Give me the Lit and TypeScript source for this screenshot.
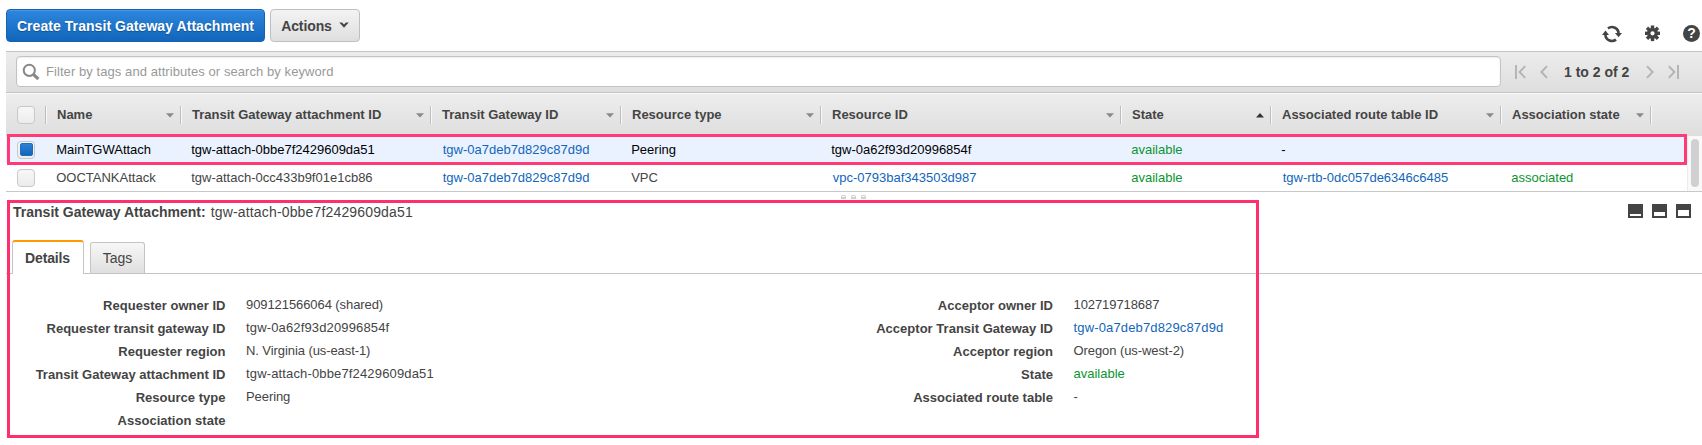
import { LitElement, html, css, svg, nothing } from "lit";
import { customElement, property, state } from "lit/decorators.js";
import { classMap } from "lit/directives/class-map.js";

type Cell = { text: string; kind?: "link" | "ok" };
type Row = { selected: boolean; cells: Cell[] };
type Field = { label: string; value: string; kind?: "link" | "ok" };

const COLUMNS = [
  "Name",
  "Transit Gateway attachment ID",
  "Transit Gateway ID",
  "Resource type",
  "Resource ID",
  "State",
  "Associated route table ID",
  "Association state",
];

const ROWS: Row[] = [
  {
    selected: true,
    cells: [
      { text: "MainTGWAttach" },
      { text: "tgw-attach-0bbe7f2429609da51" },
      { text: "tgw-0a7deb7d829c87d9d", kind: "link" },
      { text: "Peering" },
      { text: "tgw-0a62f93d20996854f" },
      { text: "available", kind: "ok" },
      { text: "-" },
      { text: "" },
    ],
  },
  {
    selected: false,
    cells: [
      { text: "OOCTANKAttack" },
      { text: "tgw-attach-0cc433b9f01e1cb86" },
      { text: "tgw-0a7deb7d829c87d9d", kind: "link" },
      { text: "VPC" },
      { text: "vpc-0793baf343503d987", kind: "link" },
      { text: "available", kind: "ok" },
      { text: "tgw-rtb-0dc057de6346c6485", kind: "link" },
      { text: "associated", kind: "ok" },
    ],
  },
];

const REQUESTER: Field[] = [
  { label: "Requester owner ID", value: "909121566064 (shared)" },
  { label: "Requester transit gateway ID", value: "tgw-0a62f93d20996854f" },
  { label: "Requester region", value: "N. Virginia (us-east-1)" },
  { label: "Transit Gateway attachment ID", value: "tgw-attach-0bbe7f2429609da51" },
  { label: "Resource type", value: "Peering" },
  { label: "Association state", value: "" },
];

const ACCEPTOR: Field[] = [
  { label: "Acceptor owner ID", value: "102719718687" },
  { label: "Acceptor Transit Gateway ID", value: "tgw-0a7deb7d829c87d9d", kind: "link" },
  { label: "Acceptor region", value: "Oregon (us-west-2)" },
  { label: "State", value: "available", kind: "ok" },
  { label: "Associated route table", value: "-" },
];

@customElement("top-toolbar")
class TopToolbar extends LitElement {
  static styles = css`
    :host { display: flex; height: 51px; box-sizing: border-box; padding: 9px 2px 0 6px; }
    .btn {
      box-sizing: border-box; height: 33px; border-radius: 4px; font: bold 14px/31px "Liberation Sans", Arial, sans-serif;
      padding: 0; white-space: nowrap; display: flex; align-items: center; justify-content: center;
    }
    .primary {
      width: 259px; margin-right: 5px; color: #fff; border: 1px solid #1663b4;
      background: linear-gradient(#2e86de, #1166bb); letter-spacing: 0.06px; padding: 2px 0 0;
      text-shadow: 0 1px 1px rgba(0, 0, 0, 0.3);
      box-shadow: inset 0 1px 0 #4896e3;
    }
    .plain {
      width: 90px; gap: 7px; color: #444; border: 1px solid #bfbfbf; letter-spacing: -0.1px; padding: 2px 0 0;
      background: linear-gradient(#f3f3f3, #dfdfdf);
    }
    .chevron { margin-bottom: 3px; }
    .icons { margin-left: auto; display: flex; align-items: flex-start; padding-top: 16px; }
    .icons svg { display: block; }
    .refresh { margin-right: 23px; }
    .gear { margin-right: 23px; }
    .q { font: bold 14px "Liberation Sans", Arial, sans-serif; }
  `;
  render() {
    const teeth = [0, 45, 90, 135, 180, 225, 270, 315];
    return html`
      <button class="btn primary">Create Transit Gateway Attachment</button>
      <button class="btn plain">
        Actions
        <svg class="chevron" width="10" height="6" viewBox="0 0 10 6"><path d="M.3.4H3L5 2.6 7 .4h2.7L5 5.8z" fill="#444"/></svg>
      </button>
      <div class="icons">
        <svg class="refresh" width="20" height="18" viewBox="0 0 20 18">
          <g fill="none" stroke="#444" stroke-width="2.6">
            <path d="M6 3.4A6.6 6.6 0 0 1 16.6 8.6"/>
            <path d="M14 14.6A6.6 6.6 0 0 1 3.4 9.4"/>
          </g>
          <path d="M13 8h7l-3.5 4.2z" fill="#444"/><path d="M0 10h7L3.5 5.6z" fill="#444"/>
        </svg>
        <svg class="gear" width="15" height="17" viewBox="0 0 15 17">
          <g fill="#444">
            ${teeth.map((a) => svg`<rect x="5.8" y="0.5" width="3.4" height="4" transform="rotate(${a} 7.5 8.3)"/>`)}
            <path fill-rule="evenodd" d="M7.5 2.8a5.5 5.5 0 1 1 0 11a5.5 5.5 0 1 1 0-11M7.5 6.2a2.1 2.1 0 1 0 0 4.2a2.1 2.1 0 1 0 0-4.2"/>
          </g>
        </svg>
        <svg width="17" height="17" viewBox="0 0 17 17">
          <circle cx="8.5" cy="8.5" r="8.5" fill="#444"/>
          <text class="q" x="8.5" y="13.4" text-anchor="middle" fill="#fff">?</text>
        </svg>
      </div>
    `;
  }
}

@customElement("filter-bar")
class FilterBar extends LitElement {
  static styles = css`
    :host {
      display: flex; box-sizing: border-box; height: 42px; margin-left: 6px; padding: 4px 0 0 10px;
      border-top: 1px solid #c4c4c4; border-bottom: 1px solid #c4c4c4;
      background: linear-gradient(#ececec, #dedede); font-family: "Liberation Sans", Arial, sans-serif;
    }
    .search {
      box-sizing: border-box; width: 1485px; height: 31px; border: 1px solid #c3c3c3; border-radius: 4px;
      background: #fff; display: flex; align-items: center; padding-left: 5px; gap: 6px;
      box-shadow: inset 0 1px 2px rgba(0, 0, 0, 0.08);
    }
    .hint { font-size: 13px; letter-spacing: 0.07px; color: #999; white-space: nowrap; }
    .pager { display: flex; align-items: center; height: 32px; margin-left: 14px; }
    .count { font-weight: bold; font-size: 14px; color: #444; width: 65px; white-space: nowrap; margin: 0 17px 0 16px; }
    .prev { margin-left: 14px; }
    .last { margin-left: 14px; }
  `;
  render() {
    return html`
      <label class="search">
        <svg width="18" height="18" viewBox="0 0 18 18">
          <circle cx="7.3" cy="7.3" r="5.6" fill="none" stroke="#888" stroke-width="2"/>
          <path d="m11.6 11.6 4.8 4.4" stroke="#888" stroke-width="3.2"/>
        </svg>
        <span class="hint">Filter by tags and attributes or search by keyword</span>
      </label>
      <div class="pager">
        <svg width="11" height="14" viewBox="0 0 11 14"><path d="M1 0v14M10.2 1.2 4.6 7l5.6 5.8" fill="none" stroke="#b3b3b3" stroke-width="1.9"/></svg>
        <svg class="prev" width="8" height="14" viewBox="0 0 8 14"><path d="M7 1.2 1.4 7 7 12.8" fill="none" stroke="#b3b3b3" stroke-width="1.9"/></svg>
        <span class="count">1 to 2 of 2</span>
        <svg width="8" height="14" viewBox="0 0 8 14"><path d="M1 1.2 6.6 7 1 12.8" fill="none" stroke="#b3b3b3" stroke-width="1.9"/></svg>
        <svg class="last" width="11" height="14" viewBox="0 0 11 14"><path d="M10 0v14M.8 1.2 6.4 7 .8 12.8" fill="none" stroke="#b3b3b3" stroke-width="1.9"/></svg>
      </div>
    `;
  }
}

@customElement("check-box")
class CheckBox extends LitElement {
  @property({ type: Boolean }) checked = false;
  static styles = css`
    :host { display: block; width: 18px; height: 18px; }
    .box {
      box-sizing: border-box; width: 18px; height: 18px; border: 1px solid #c8c8c8; border-radius: 4px;
      background: linear-gradient(#f7f7f7, #ececec); padding: 2px;
    }
    .fill { width: 13px; height: 13px; margin: -0.5px; box-sizing: border-box; border-radius: 2px; border: 1px solid #1b6dbe; background: linear-gradient(#2b82d9, #1465b8); }
  `;
  render() {
    return html`<div class="box">${this.checked ? html`<div class="fill"></div>` : nothing}</div>`;
  }
}

@customElement("attachment-table")
class AttachmentTable extends LitElement {
  static styles = css`
    :host { display: block; margin-left: 6px; font: 13px/18px "Liberation Sans", Arial, sans-serif; color: #444; border-bottom: 1px solid #c8c8c8; }
    .row { display: grid; grid-template-columns: 39px 135px 250px 190px 200px 300px 150px 230px 150px 1fr; align-items: center; }
    .head { box-sizing: border-box; height: 43px; padding-bottom: 1px; border-top: 1px solid #fafafa; background: linear-gradient(#ededed, #dedede); font-weight: bold; }
    .pick { padding-left: 11px; }
    .th {
      display: flex; align-items: center; justify-content: space-between; box-sizing: border-box; height: 18px;
      padding: 0 6px 0 11px; border-left: 1px solid #bdbdbd; box-shadow: inset 1px 0 0 #f8f8f8; white-space: nowrap;
    }
    .end { border-left: 1px solid #bdbdbd; box-shadow: inset 1px 0 0 #f8f8f8; height: 18px; }
    .arrow { margin-top: 2px; }
    .scroller { display: grid; grid-template-columns: 1fr 15px; }
    .body { position: relative; height: 55px; }
    .line { box-sizing: border-box; height: 28px; padding-top: 1px; }
    .selected { height: 27px; padding-top: 0; background: #eaf2ff; color: #000; }
    .td { padding-left: 11.2px; white-space: nowrap; }
    .link { color: #1166bb; padding-left: 12.7px; }
    .ok { color: #0a9530; }
    .track { box-sizing: border-box; background: #f9f9f9; border-left: 1px solid #ececec; padding: 3px 0 0 3px; }
    .thumb { width: 8px; height: 48px; border-radius: 4px; background: #d0d0d2; }
    .mark { position: absolute; left: 1px; right: 0; top: -2px; height: 31px; box-sizing: border-box; border: 3px solid #ff3a75; }
  `;
  render() {
    return html`
      <div class="row head">
        <div class="pick"><check-box></check-box></div>
        ${COLUMNS.map(
          (c) => html`<div class="th"><span>${c}</span>
            <svg class="arrow" width="8" height="5" viewBox="0 0 8 5">
              ${c === "State" ? svg`<path d="M0 4.6h8L4 0z" fill="#333"/>` : svg`<path d="M0 .2h8L4 4.6z" fill="#8a8a8a"/>`}
            </svg></div>`
        )}
        <div class="end"></div>
      </div>
      <div class="scroller">
        <div class="body">
          ${ROWS.map(
            (r) => html`<div class=${classMap({ row: true, line: true, selected: r.selected })}>
              <div class="pick"><check-box ?checked=${r.selected}></check-box></div>
              ${r.cells.map((c) => html`<div class=${classMap({ td: true, link: c.kind === "link", ok: c.kind === "ok" })}>${c.text}</div>`)}
            </div>`
          )}
          <div class="mark"></div>
        </div>
        <div class="track"><div class="thumb"></div></div>
      </div>
    `;
  }
}

@customElement("detail-panel")
class DetailPanel extends LitElement {
  @state() private tab = "Details";
  static styles = css`
    :host { display: block; position: relative; height: 253px; margin-left: 6px; font-family: "Liberation Sans", Arial, sans-serif; color: #444; }
    .grip { height: 8px; box-sizing: border-box; padding: 3px 0 0 835px; display: flex; gap: 5px; }
    .dot { width: 5px; height: 4px; box-sizing: border-box; border: 1px solid #cfcfcf; border-bottom-width: 2px; border-radius: 2px 2px 0 0; }
    .bar { display: flex; justify-content: space-between; height: 40px; padding: 4px 11px 0 7px; box-sizing: border-box; }
    .title { font-size: 14px; line-height: 18px; margin-top: -1px; white-space: nowrap; display: flex; gap: 5px; }
    .name { letter-spacing: 0.01px; }
    .value { letter-spacing: 0.16px; }
    .sizes { display: flex; gap: 9px; }
    .tabs { display: flex; height: 34px; box-sizing: border-box; border-bottom: 1px solid #c4c4c4; padding-left: 6px; align-items: flex-end; font-size: 14px; }
    .tab {
      box-sizing: border-box; height: 31px; width: 55px; border: 1px solid #c4c4c4; border-bottom: 0; border-radius: 3px 3px 0 0;
      background: linear-gradient(#f7f7f7, #dfdfdf); display: flex; align-items: center; justify-content: center; margin-left: 6px; padding-bottom: 1px;
    }
    .on { background: #fff; width: 72px; height: 34px; margin: 0 0 -1px; border-top: 2px solid #f90; font-weight: bold; padding: 0 1px 1px 0; letter-spacing: -0.15px; }
    .groups { display: grid; grid-template-columns: 827.5px 1fr; padding-top: 19px; font-size: 13px; line-height: 23px; }
    .field { display: grid; grid-template-columns: 219.5px 1fr; column-gap: 20.5px; height: 23px; white-space: nowrap; }
    .key { font-weight: bold; text-align: right; padding-top: 1px; letter-spacing: 0.02px; }
    .val { letter-spacing: -0.08px; }
    .code { letter-spacing: 0.15px; }
    .link { color: #1166bb; }
    .ok { color: #0a9530; letter-spacing: 0; }
    .mark { position: absolute; left: 1px; top: 8px; width: 1252px; height: 238px; box-sizing: border-box; border: 3px solid #ff2f6d; }
  `;
  private group(fields: Field[]) {
    return html`<div>
      ${fields.map(
        (f) => html`<div class="field"><div class="key">${f.label}</div>
          <div class=${classMap({ val: true, code: f.value.startsWith("tgw-"), link: f.kind === "link", ok: f.kind === "ok" })}>${f.value}</div></div>`
      )}
    </div>`;
  }
  render() {
    const panes = ["M2 10h11v2H2z", "M2 8h11v4H2z", "M2 6h11v6H2z"];
    return html`
      <div class="grip"><div class="dot"></div><div class="dot"></div><div class="dot"></div></div>
      <div class="bar">
        <div class="title"><b class="name">Transit Gateway Attachment:</b><span class="value">tgw-attach-0bbe7f2429609da51</span></div>
        <div class="sizes">
          ${panes.map((d) => html`<svg width="15" height="14" viewBox="0 0 15 14"><path fill="#444" d="M0 0h15v14H0z"/><path fill="#fff" d=${d} /></svg>`)}
        </div>
      </div>
      <div class="tabs">
        ${["Details", "Tags"].map((t) => html`<div class=${classMap({ tab: true, on: t === this.tab })} @click=${() => (this.tab = t)}>${t}</div>`)}
      </div>
      <div class="groups">${this.group(REQUESTER)}${this.group(ACCEPTOR)}</div>
      <div class="mark"></div>
    `;
  }
}

@customElement("app-root")
class AppRoot extends LitElement {
  static styles = css`
    :host { display: block; height: 445px; background: #fff; overflow: hidden; }
  `;
  render() {
    return html`
      <top-toolbar></top-toolbar>
      <filter-bar></filter-bar>
      <attachment-table></attachment-table>
      <detail-panel></detail-panel>
    `;
  }
}
